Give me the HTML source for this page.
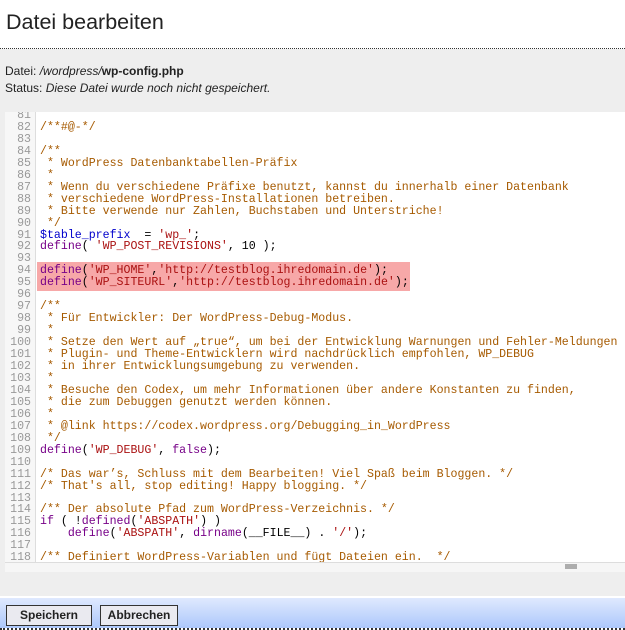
<!DOCTYPE html>
<html><head><meta charset="utf-8"><style>
body{margin:0;width:625px;height:630px;background:#fff;font-family:"Liberation Sans",sans-serif;position:relative;overflow:hidden}
h1{position:absolute;left:6px;top:10px;margin:0;font-weight:normal;font-size:21.5px;color:#222}
.dot1{position:absolute;left:0;top:48px;width:625px;border-top:1px dotted #333}
.panel{position:absolute;left:0;top:49px;width:625px;height:547px;background:#eeeeee}
.info{position:absolute;left:5px;top:63px;font-size:12px;color:#222;line-height:16.5px}
.box{position:absolute;left:5px;top:112px;width:620px;height:450px;background:#fff;overflow:hidden}
.gut{position:absolute;left:0;top:0;width:30px;height:450px;background:#f7f7f7;border-right:1px solid #ddd}
.code{position:absolute;left:0;top:-2px;font-family:"Liberation Mono",monospace;font-size:11.6px;line-height:11.95px;white-space:pre;color:#000}
.ln{display:inline-block;width:26px;text-align:right;color:#999;margin-right:9px}
.c{color:#a65a00}.k{color:#770088}.s{color:#aa1111}.v{color:#0000cc}
.hl{position:absolute;left:37px;top:262px;width:373px;height:29px;background:#f7a8a8}
.sb{position:absolute;left:5px;top:562px;width:620px;height:9px;background:#f6f6f6;border-top:1px solid #ddd}
.grip{position:absolute;left:565px;top:564px;width:12px;height:5px;background-image:radial-gradient(#000 0.7px,transparent 0.8px);background-size:2px 2px}
.bar{position:absolute;left:0;top:598px;width:625px;height:30px;background:linear-gradient(#dfe9fe,#adc8fb)}
.dot2{position:absolute;left:0;top:628px;width:625px;border-top:2px dotted #333}
.btn{position:absolute;top:605px;height:19px;border:1px solid #333;background:#eaeaf0;font-size:12px;font-weight:bold;color:#222;text-align:center;line-height:19px}
</style></head><body>
<h1>Datei bearbeiten</h1>
<div class="dot1"></div>
<div class="panel"></div>
<div class="info">Datei: <i>/wordpress/</i><b>wp-config.php</b><br>Status: <i>Diese Datei wurde noch nicht gespeichert.</i></div>
<div class="box"><div class="gut"></div></div>
<div class="hl"></div>
<div class="box" style="background:transparent"><div class="code"><span class="ln">81</span>
<span class="ln">82</span><span class="c">/**#@-*/</span>
<span class="ln">83</span>
<span class="ln">84</span><span class="c">/**</span>
<span class="ln">85</span><span class="c"> * WordPress Datenbanktabellen-Präfix</span>
<span class="ln">86</span><span class="c"> *</span>
<span class="ln">87</span><span class="c"> * Wenn du verschiedene Präfixe benutzt, kannst du innerhalb einer Datenbank</span>
<span class="ln">88</span><span class="c"> * verschiedene WordPress-Installationen betreiben.</span>
<span class="ln">89</span><span class="c"> * Bitte verwende nur Zahlen, Buchstaben und Unterstriche!</span>
<span class="ln">90</span><span class="c"> */</span>
<span class="ln">91</span><span class="v">$table_prefix</span>  = <span class="s">'wp_'</span>;
<span class="ln">92</span><span class="k">define</span>( <span class="s">'WP_POST_REVISIONS'</span>, 10 );
<span class="ln">93</span>
<span class="ln">94</span><span class="k">define</span>(<span class="s">'WP_HOME'</span>,<span class="s">'http://testblog.ihredomain.de'</span>);
<span class="ln">95</span><span class="k">define</span>(<span class="s">'WP_SITEURL'</span>,<span class="s">'http://testblog.ihredomain.de'</span>);
<span class="ln">96</span>
<span class="ln">97</span><span class="c">/**</span>
<span class="ln">98</span><span class="c"> * Für Entwickler: Der WordPress-Debug-Modus.</span>
<span class="ln">99</span><span class="c"> *</span>
<span class="ln">100</span><span class="c"> * Setze den Wert auf „true“, um bei der Entwicklung Warnungen und Fehler-Meldungen</span>
<span class="ln">101</span><span class="c"> * Plugin- und Theme-Entwicklern wird nachdrücklich empfohlen, WP_DEBUG</span>
<span class="ln">102</span><span class="c"> * in ihrer Entwicklungsumgebung zu verwenden.</span>
<span class="ln">103</span><span class="c"> *</span>
<span class="ln">104</span><span class="c"> * Besuche den Codex, um mehr Informationen über andere Konstanten zu finden,</span>
<span class="ln">105</span><span class="c"> * die zum Debuggen genutzt werden können.</span>
<span class="ln">106</span><span class="c"> *</span>
<span class="ln">107</span><span class="c"> * @link https://codex.wordpress.org/Debugging_in_WordPress</span>
<span class="ln">108</span><span class="c"> */</span>
<span class="ln">109</span><span class="k">define</span>(<span class="s">'WP_DEBUG'</span>, <span class="k">false</span>);
<span class="ln">110</span>
<span class="ln">111</span><span class="c">/* Das war’s, Schluss mit dem Bearbeiten! Viel Spaß beim Bloggen. */</span>
<span class="ln">112</span><span class="c">/* That's all, stop editing! Happy blogging. */</span>
<span class="ln">113</span>
<span class="ln">114</span><span class="c">/** Der absolute Pfad zum WordPress-Verzeichnis. */</span>
<span class="ln">115</span><span class="k">if</span> ( !<span class="k">defined</span>(<span class="s">'ABSPATH'</span>) )
<span class="ln">116</span>    <span class="k">define</span>(<span class="s">'ABSPATH'</span>, <span class="k">dirname</span>(__FILE__) . <span class="s">'/'</span>);
<span class="ln">117</span>
<span class="ln">118</span><span class="c">/** Definiert WordPress-Variablen und fügt Dateien ein.  */</span>
</div></div>
<div class="sb"></div>
<div class="grip"></div>
<div class="bar"></div>
<div class="btn" style="left:6px;width:84px">Speichern</div>
<div class="btn" style="left:100px;width:76px">Abbrechen</div>
<div class="dot2"></div>
</body></html>
